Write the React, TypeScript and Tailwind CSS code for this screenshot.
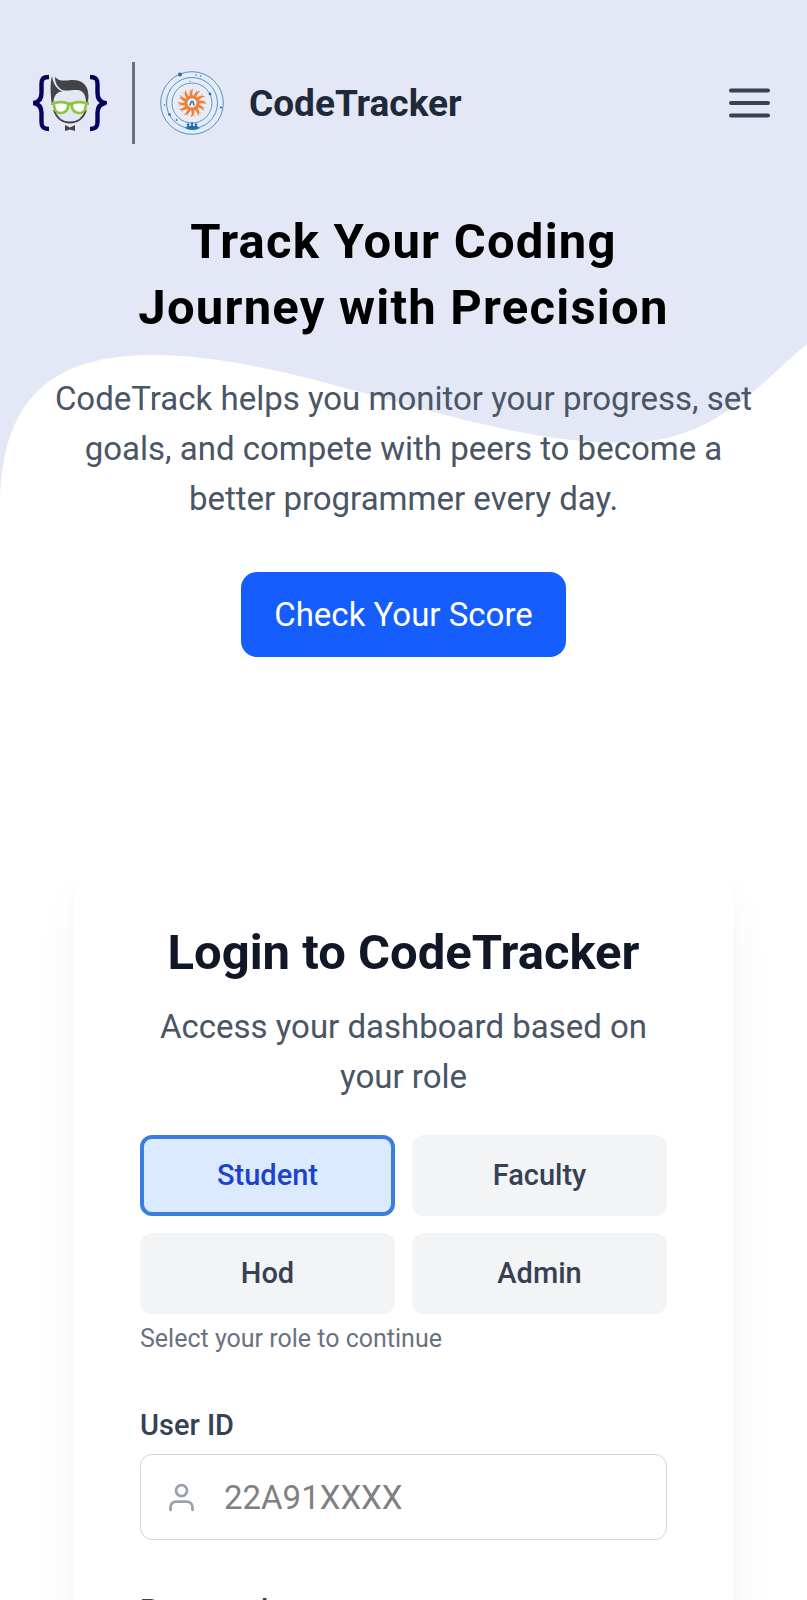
import { useState } from "react";
import type { ReactNode } from "react";

const roles = ["Student", "Faculty", "Hod", "Admin"];

function CoderLogo() {
  return (
    <svg viewBox="0 0 74 58" className="h-[58px] w-[74px]" fill="none" aria-hidden="true">
      <g stroke="#05055f" strokeWidth="4.400" strokeLinejoin="round">
        <path d="M16 3C10 3 8.500 5 8.500 10V19C8.500 25 6 28 1 29C6 30 8.500 33 8.500 39V48C8.500 53 10 55 16 55" />
        <path d="M57 3C63 3 64.500 5 64.500 10V19C64.500 25 67 28 72 29C67 30 64.500 33 64.500 39V48C64.500 53 63 55 57 55" />
      </g>
      <path d="M21 34C23 43 29 48 37 48C45 48 50 43 53 34V38C50 46 45 49 37 49C29 49 24 46 21 38Z" fill="#fff" />
      <path d="M21 36C24 45.500 30 48.500 37 48.500C44 48.500 50 45.500 53 36" stroke="#444448" strokeWidth="1.800" />
      <path d="M19 2C20 9 23 15 29.500 17.500C24 18 21 21 20.500 28H18.500C17.500 19 17 9 19 2Z" fill="#444448" />
      <path
        d="M22 3C27 8 32 6.500 38 6C48 5.500 54 10 55 18C55.800 22 55.500 26 54.500 29H53C53 22 51 17 45 16C38 15.500 31 18.500 27 14.500C23.500 11 22 8 22 3Z"
        fill="#444448"
      />
      <g fill="#fff" stroke="#8cc63f" strokeWidth="2.600" strokeLinejoin="round">
        <path d="M21 29C25 28 31 28 35 29.500C36 35 33 39 27 39C22 39 21 34 21 29Z" />
        <path d="M39 29.500C43 28 49 28 53 29C53 34 52 39 47 39C41 39 38 35 39 29.500Z" />
      </g>
      <path d="M18 29.500H22M34 30.500Q37 29 40 30.500M52 29.500H56" stroke="#8cc63f" strokeWidth="2.800" />
      <path d="M32 51L37 53.500L42 51V57L37 55.500L32 57Z" fill="#444448" />
    </svg>
  );
}

function OrbitLogo() {
  const rays = Array.from({ length: 12 }, (_, i) => i * 30);
  return (
    <svg viewBox="0 0 66 66" className="size-[66px]" fill="none" aria-hidden="true">
      <circle cx="33" cy="33" r="31.300" fill="#e1edfb" stroke="#5382ae" strokeWidth="0.900" />
      <circle cx="33" cy="33" r="25.500" stroke="#5382ae" strokeWidth="0.900" />
      <circle cx="33" cy="33" r="20" fill="#e7edf8" stroke="#6489b0" strokeWidth="0.900" />
      <g fill="#ee8136">
        {rays.map((angle) => (
          <g key={angle} transform={`rotate(${angle} 33 33)`}>
            <path d="M31 27C30 23.500 30.500 20.500 34.500 18.500C32.800 21.500 33 24.500 34.500 27Z" />
            <circle cx="37.500" cy="21" r="0.600" />
          </g>
        ))}
        <circle cx="33" cy="33" r="7.500" />
      </g>
      <circle cx="33" cy="33" r="4.600" fill="#f0f3fa" />
      <path d="M30.800 35.500L32.600 30.800M33.600 30.800L35.200 35.500" stroke="#2472ad" strokeWidth="1.500" />
      <path d="M26 58C30 56 37 56 41 58C37 60.500 30 60.500 26 58Z" fill="#176aab" />
      <g fill="#2472ad">
        <circle cx="29" cy="54.500" r="1.200" />
        <circle cx="33" cy="53.500" r="1.300" />
        <circle cx="37" cy="54.500" r="1.200" />
        <path d="M27.500 57L29 54.500L31 56.500L33 54L35 56.500L37 54.500L39 57Z" />
        <circle cx="21" cy="4.500" r="2" />
        <circle cx="51" cy="24" r="1.400" />
        <circle cx="62" cy="37.500" r="1.100" />
        <circle cx="10.500" cy="44.500" r="1.300" />
        <circle cx="5.500" cy="35" r="0.800" />
        <circle cx="37" cy="5" r="0.700" />
        <circle cx="41.500" cy="6" r="0.700" />
        <circle cx="31" cy="11" r="0.600" />
        <circle cx="17.500" cy="50" r="0.900" />
      </g>
    </svg>
  );
}

function Field({
  id,
  label,
  type,
  placeholder,
  children,
}: {
  id: string;
  label: string;
  type: string;
  placeholder?: string;
  children: ReactNode;
}) {
  return (
    <div className="mt-[50px]">
      <label htmlFor={id} className="block text-[29px] leading-[41px] font-medium text-gray-700">
        {label}
      </label>
      <div className="mt-2 flex h-[86px] items-center gap-[26px] rounded-[12px] border border-gray-300 bg-white pl-6 focus-within:border-blue-500">
        <svg
          viewBox="0 0 24 24"
          className="size-[33px] shrink-0 text-[#99a1af]"
          fill="none"
          stroke="currentColor"
          strokeWidth="2"
          strokeLinecap="round"
          strokeLinejoin="round"
          aria-hidden="true"
        >
          {children}
        </svg>
        <input
          id={id}
          type={type}
          placeholder={placeholder}
          className="h-full min-w-0 flex-1 rounded-[12px] bg-transparent text-[33px] text-gray-900 outline-none placeholder:text-[#808080]"
        />
      </div>
    </div>
  );
}

export default function App() {
  const [role, setRole] = useState("Student");

  return (
    <div className="relative isolate overflow-hidden bg-white font-['Roboto',sans-serif]">
      <svg
        viewBox="0 0 807 512"
        preserveAspectRatio="none"
        className="absolute inset-x-0 top-0 -z-10 h-[512px] w-full"
        aria-hidden="true"
      >
        <path
          d="M0 0H807V344C760 383 715 443 622 443C470 443 300 355 153 355C50 355 0 400 0 508Z"
          fill="#e4e7f5"
        />
      </svg>

      <header className="flex items-center justify-between pt-[62px] pr-8 pl-[33px]">
        <div className="flex items-center">
          <CoderLogo />
          <span className="mr-[24px] ml-[25px] h-[82px] w-[3px] bg-gray-500" />
          <OrbitLogo />
          <span className="ml-[24px] text-[37px] leading-[57px] font-bold text-gray-800">CodeTracker</span>
        </div>
        <button type="button" aria-label="Open menu" className="text-gray-700">
          <svg
            viewBox="0 0 50 50"
            className="size-[50px]"
            stroke="currentColor"
            strokeWidth="4"
            strokeLinecap="round"
            aria-hidden="true"
          >
            <path d="M6 12.500H43M6 25H43M6 37.500H43" />
          </svg>
        </button>
      </header>

      <main>
        <section className="px-8 pt-[65px] text-center">
          <h1 className="mx-auto max-w-[600px] text-[49px] leading-[66px] font-bold tracking-wide text-black">
            Track Your Coding Journey with Precision
          </h1>
          <p className="mx-auto mt-[33px] max-w-[720px] text-[33px] leading-[50px] text-gray-600">
            CodeTrack helps you monitor your progress, set goals, and compete with peers to become a better
            programmer every day.
          </p>
          <button
            type="button"
            className="mt-12 rounded-[16px] bg-blue-600 px-[33px] py-[18px] text-[33px] leading-[49px] text-white"
          >
            Check Your Score
          </button>
        </section>

        <section className="mx-[74px] mt-[197px] rounded-[16px] bg-white p-[66px] shadow-[0_41px_51px_-10px_rgb(0_0_0/0.07),0_16px_20px_-12px_rgb(0_0_0/0.07)]">
          <h2 className="text-center text-[49px] leading-[66px] font-bold text-gray-900">Login to CodeTracker</h2>
          <p className="mt-4 text-center text-[33px] leading-[50px] text-gray-600">
            Access your dashboard based on your role
          </p>
          <form>
            <div className="mt-[33px] grid grid-cols-2 gap-[17px]">
              {roles.map((name) => (
                <button
                  key={name}
                  type="button"
                  aria-pressed={role === name}
                  onClick={() => setRole(name)}
                  className={
                    role === name
                      ? "h-[81px] rounded-[12px] border-4 border-[#3a7edf] bg-blue-100 text-[29px] leading-[41px] font-medium text-[#1c43cc]"
                      : "h-[81px] rounded-[12px] bg-gray-100 text-[29px] leading-[41px] font-medium text-gray-700"
                  }
                >
                  {name}
                </button>
              ))}
            </div>
            <p className="mt-2 text-[25px] leading-[33px] text-gray-500">Select your role to continue</p>

            <Field id="user-id" label="User ID" type="text" placeholder="22A91XXXX">
              <path d="M20 21v-2a4 4 0 0 0-4-4H8a4 4 0 0 0-4 4v2" />
              <circle cx="12" cy="7" r="4" />
            </Field>
            <Field id="password" label="Password" type="password">
              <rect x="3" y="11" width="18" height="11" rx="2" />
              <path d="M7 11V7a5 5 0 0 1 10 0v4" />
            </Field>
          </form>
        </section>
      </main>
    </div>
  );
}
